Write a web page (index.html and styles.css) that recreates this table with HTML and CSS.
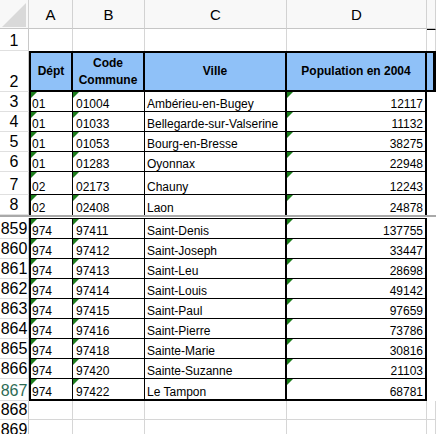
FILE: index.html
```html
<!DOCTYPE html>
<html lang="fr">
<head>
<meta charset="utf-8">
<title>Communes</title>
<link rel="stylesheet" href="styles.css">
</head>
<body>
<div class="sheet">
  <div class="row colhdr">
    <div class="ch corner"><svg width="28" height="28" viewBox="0 0 28 28"><polygon points="2,27 26,3 26,27" fill="#d9d9d9"/></svg></div>
    <div class="ch">A</div>
    <div class="ch">B</div>
    <div class="ch">C</div>
    <div class="ch">D</div>
    <div class="ch"></div>
  </div>
  <div class="row r1">
    <div class="rh">1</div>
    <div class="c a"></div><div class="c b"></div><div class="c v"></div><div class="c d"></div><div class="c e"></div>
  </div>
  <div class="row hdr">
    <div class="rh">2</div>
    <div class="c a">Dépt</div>
    <div class="c b">Code<br>Commune</div>
    <div class="c v">Ville</div>
    <div class="c d">Population en 2004</div>
    <div class="c e"></div>
  </div>
  <div class="row data"><div class="rh">3</div><div class="c a flag">01</div><div class="c b flag">01004</div><div class="c v">Ambérieu-en-Bugey</div><div class="c d flag">12117</div><div class="c e"></div></div>
  <div class="row data"><div class="rh">4</div><div class="c a flag">01</div><div class="c b flag">01033</div><div class="c v">Bellegarde-sur-Valserine</div><div class="c d flag">11132</div><div class="c e"></div></div>
  <div class="row data"><div class="rh">5</div><div class="c a flag">01</div><div class="c b flag">01053</div><div class="c v">Bourg-en-Bresse</div><div class="c d flag">38275</div><div class="c e"></div></div>
  <div class="row data"><div class="rh">6</div><div class="c a flag">01</div><div class="c b flag">01283</div><div class="c v">Oyonnax</div><div class="c d flag">22948</div><div class="c e"></div></div>
  <div class="row data"><div class="rh">7</div><div class="c a flag">02</div><div class="c b flag">02173</div><div class="c v">Chauny</div><div class="c d flag">12243</div><div class="c e"></div></div>
  <div class="row data split"><div class="rh">8</div><div class="c a flag">02</div><div class="c b flag">02408</div><div class="c v">Laon</div><div class="c d flag">24878</div><div class="c e"></div></div>
  <div class="split-line"></div>
  <div class="row data top"><div class="rh">859</div><div class="c a flag">974</div><div class="c b flag">97411</div><div class="c v">Saint-Denis</div><div class="c d flag">137755</div><div class="c e"></div></div>
  <div class="row data"><div class="rh">860</div><div class="c a flag">974</div><div class="c b flag">97412</div><div class="c v">Saint-Joseph</div><div class="c d flag">33447</div><div class="c e"></div></div>
  <div class="row data"><div class="rh">861</div><div class="c a flag">974</div><div class="c b flag">97413</div><div class="c v">Saint-Leu</div><div class="c d flag">28698</div><div class="c e"></div></div>
  <div class="row data"><div class="rh">862</div><div class="c a flag">974</div><div class="c b flag">97414</div><div class="c v">Saint-Louis</div><div class="c d flag">49142</div><div class="c e"></div></div>
  <div class="row data"><div class="rh">863</div><div class="c a flag">974</div><div class="c b flag">97415</div><div class="c v">Saint-Paul</div><div class="c d flag">97659</div><div class="c e"></div></div>
  <div class="row data"><div class="rh">864</div><div class="c a flag">974</div><div class="c b flag">97416</div><div class="c v">Saint-Pierre</div><div class="c d flag">73786</div><div class="c e"></div></div>
  <div class="row data"><div class="rh">865</div><div class="c a flag">974</div><div class="c b flag">97418</div><div class="c v">Sainte-Marie</div><div class="c d flag">30816</div><div class="c e"></div></div>
  <div class="row data"><div class="rh">866</div><div class="c a flag">974</div><div class="c b flag">97420</div><div class="c v">Sainte-Suzanne</div><div class="c d flag">21103</div><div class="c e"></div></div>
  <div class="row data last"><div class="rh active">867</div><div class="c a flag">974</div><div class="c b flag">97422</div><div class="c v">Le Tampon</div><div class="c d flag">68781</div><div class="c e"></div></div>
  <div class="row blank"><div class="rh">868</div><div class="c a"></div><div class="c b"></div><div class="c v"></div><div class="c d"></div><div class="c e"></div></div>
  <div class="row blank"><div class="rh">869</div><div class="c a"></div><div class="c b"></div><div class="c v"></div><div class="c d"></div><div class="c e"></div></div>
</div>
</body>
</html>
```
FILE: styles.css
```css
html, body {
  margin: 0;
  padding: 0;
  background: #fff;
}

.sheet {
  display: grid;
  grid-template-columns: 29px 44px 72px 142px 140px 9px;
  grid-template-rows: 29px 22px 41px 20px 20px 20px 20px 23px 20px 3px 21px 20px 20px 20px 20px 20px 20px 20px 22px 19px 20px;
  width: 436px;
  height: 434px;
  overflow: hidden;
  font-family: "Liberation Sans", Arial, Helvetica, sans-serif;
  color: #000;
}

.row {
  display: contents;
}

.ch, .rh, .c {
  box-sizing: border-box;
  display: flex;
  white-space: nowrap;
  overflow: hidden;
  position: relative;
}

/* column headers */
.ch {
  background: #f8f8f8;
  border-right: 1px solid #d2d2d2;
  border-bottom: 1px solid #c6c6c6;
  justify-content: center;
  align-items: center;
  font-size: 15px;
  line-height: 17px;
}

.corner svg {
  display: block;
}

/* row headers */
.rh {
  background: #fff;
  border-right: 1px solid #c8c8c8;
  border-bottom: 1px solid #e0e0e0;
  justify-content: center;
  align-items: flex-end;
  font-size: 16px;
  line-height: 18px;
}

.rh.active {
  color: #2d6b55;
}

/* cells */
.c {
  border-right: 1px solid #d6d6d6;
  border-bottom: 1px solid #d6d6d6;
  align-items: flex-end;
  font-size: 12px;
  line-height: 14px;
  padding: 0 2px;
}

.r1 .c {
  border-bottom: none;
}

.r1 .e {
  border-top: 1px solid #000;
}

/* header row */
.hdr .c {
  background: #8fc1f8;
  border-top: 2px solid #000;
  border-bottom: 2px solid #000;
  border-right: 2px solid #000;
  justify-content: center;
  align-items: center;
  text-align: center;
  font-weight: bold;
  font-size: 12px;
  line-height: 17px;
  padding: 0;
}

.hdr .a {
  border-left: 2px solid #000;
}

.hdr .b {
  padding-top: 1px;
}

.hdr .e {
  border-right-width: 3px;
}

/* data rows */
.data .c {
  border-right: 1px solid #000;
  border-bottom: 1px solid #000;
}

.data .a {
  border-left: 2px solid #000;
  padding-left: 1px;
}

.data .b {
  padding-left: 3px;
}

.data .v {
  padding-left: 2px;
  border-right-width: 2px;
}

.data .d {
  border-right-width: 2px;
  justify-content: flex-end;
  padding-right: 2px;
}

.data .e {
  border: none;
}

.data.top .c:not(.e) {
  border-top: 1px solid #000;
}

.data.last .c:not(.e) {
  border-bottom-width: 2px;
}

.data.split .c {
  border-bottom: none;
}

.flag::before {
  content: "";
  position: absolute;
  top: 0;
  left: 0;
  border-top: 6px solid #1c7d1c;
  border-right: 6px solid transparent;
}

/* frozen pane split */
.split-line {
  grid-column: 1 / -1;
  border-top: 2px solid #a9a9a9;
  background: #fff;
}
```
